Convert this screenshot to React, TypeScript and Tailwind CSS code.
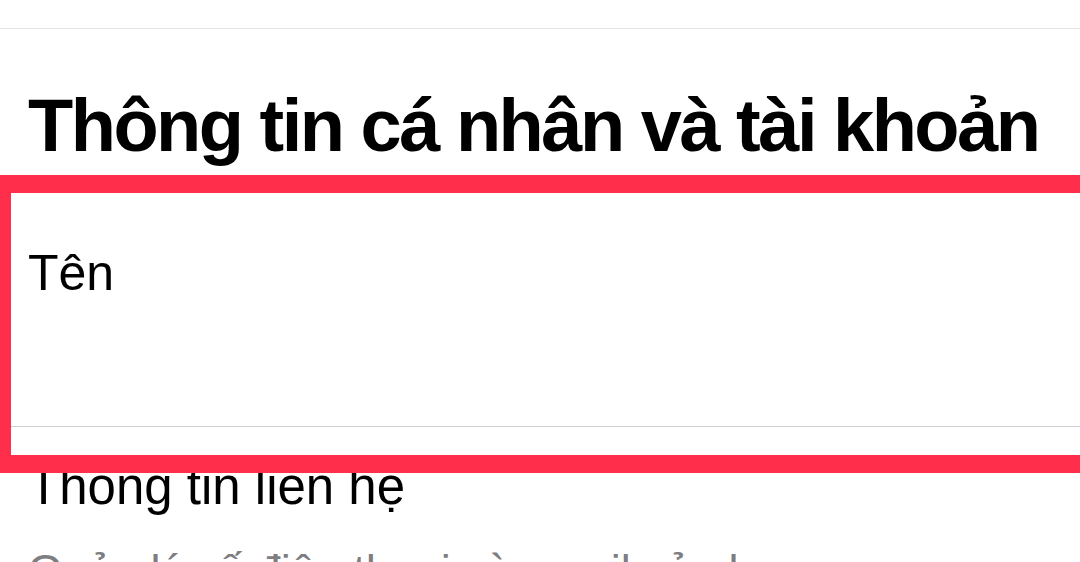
import React from 'react';

// Account settings screen, with the "Tên" row highlighted by a red frame
const App: React.FC = () => {
    return (
        <div className="relative h-[562px] w-[1080px] overflow-hidden bg-white font-['Liberation_Sans',Arial,sans-serif] text-black">
            {/* top separator of the nav bar */}
            <div className="h-[29px] border-b border-[#e4e4e4]" />

            <h1 className="mt-[60px] pl-[28px] text-[74px] font-bold leading-none tracking-[-2.5px] whitespace-nowrap">
                Thông tin cá nhân và tài khoản
            </h1>

            <section className="mt-[85px]">
                <div className="border-b border-[#d2d2d4]">
                    <div className="pl-[28px] text-[50px] leading-none">Tên</div>
                    {/* value is blurred in the original screenshot */}
                    <div className="h-[128px]" />
                </div>

                <div className="pt-[34px] pl-[28px]">
                    <div className="text-[51px] leading-none whitespace-nowrap">Thông tin liên hệ</div>
                    <div className="mt-[36px] text-[45px] leading-none text-[#7d7d82] whitespace-nowrap">
                        Quản lý số điện thoại và email của bạn
                    </div>
                </div>
            </section>

            {/* highlight frame drawn over the row */}
            <div className="pointer-events-none absolute left-[-7px] top-[175px] h-[298px] w-[1110px] border-[18px] border-[#ff2e4a]" />
        </div>
    );
};

export default App;
